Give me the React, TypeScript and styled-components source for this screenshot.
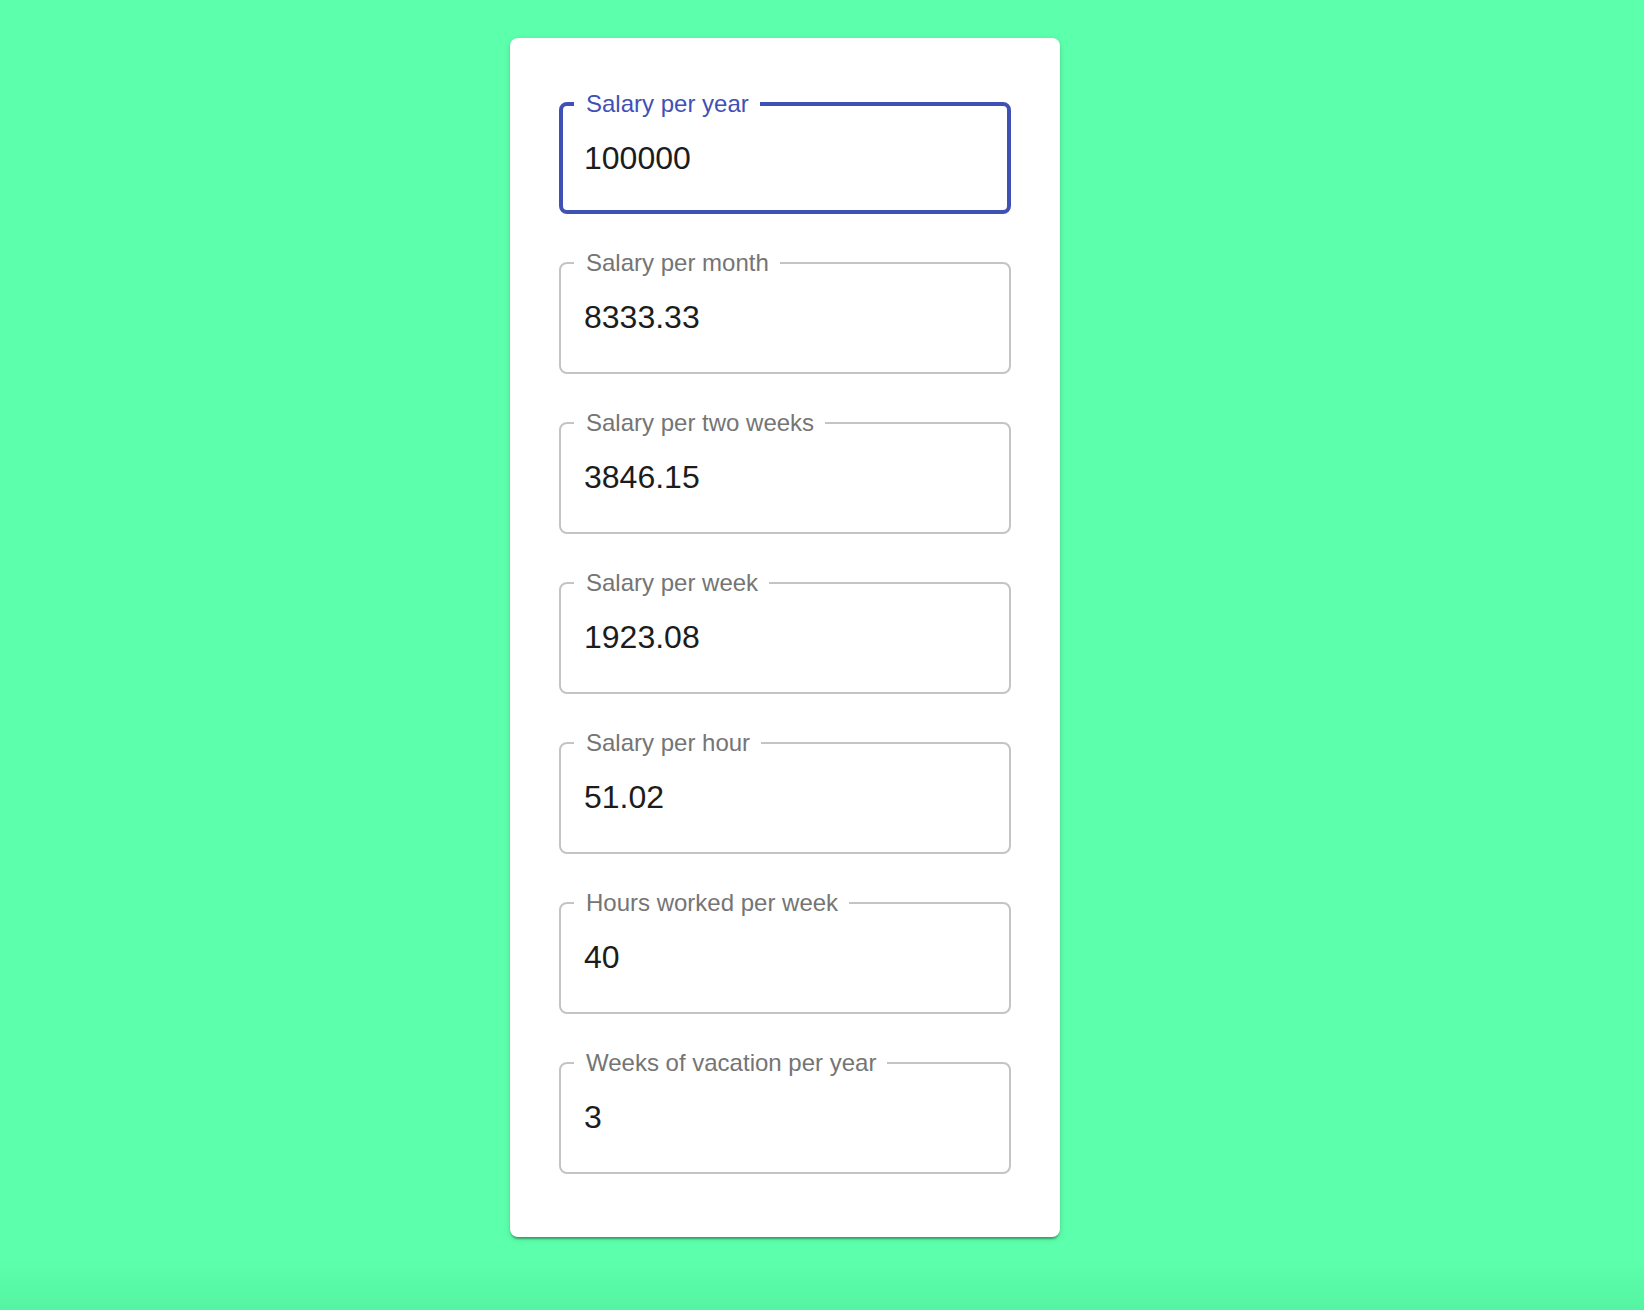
import styled, { createGlobalStyle } from "styled-components";

const GlobalStyle = createGlobalStyle`
  html, body {
    margin: 0;
    padding: 0;
  }
  body {
    font-family: "Liberation Sans", Arial, sans-serif;
    background: #5cffab;
  }
`;

const fields = [
  { label: "Salary per year", value: "100000", focused: true },
  { label: "Salary per month", value: "8333.33" },
  { label: "Salary per two weeks", value: "3846.15" },
  { label: "Salary per week", value: "1923.08" },
  { label: "Salary per hour", value: "51.02" },
  { label: "Hours worked per week", value: "40" },
  { label: "Weeks of vacation per year", value: "3" },
];

export default function App() {
  return (
    <>
      <GlobalStyle />
      <Page>
        <Card>
          {fields.map((f) => (
            <Field key={f.label} $focused={!!f.focused}>
              <Label $focused={!!f.focused}>{f.label}</Label>
              <Input
                $focused={!!f.focused}
                defaultValue={f.value}
                readOnly
              />
            </Field>
          ))}
        </Card>
      </Page>
    </>
  );
}

const Page = styled.div`
  min-height: 1310px;
  box-sizing: border-box;
  padding: 38px 0 0 510px;
  background: linear-gradient(
    to bottom,
    #5cffab 0px,
    #5cffab 1260px,
    #55f4a2 1310px
  );
`;

const Card = styled.div`
  width: 550px;
  box-sizing: border-box;
  padding: 54px 49px 63px;
  background: #fff;
  border-radius: 8px;
  box-shadow: 0 4px 2px -2px rgba(0, 0, 0, 0.2), 0 2px 2px rgba(0, 0, 0, 0.14),
    0 2px 6px rgba(0, 0, 0, 0.12);
  display: flex;
  flex-direction: column;
  gap: 37px;
`;

const Field = styled.fieldset<{ $focused: boolean }>`
  margin: 0;
  padding: 0;
  min-width: 0;
  border: ${(p) => (p.$focused ? "4px solid #3f51b5" : "2px solid #c4c4c4")};
  border-radius: 8px;
  display: flex;
`;

const Label = styled.legend<{ $focused: boolean }>`
  margin-left: ${(p) => (p.$focused ? 11 : 13)}px;
  padding: 0 11px 0 12px;
  font-size: 24px;
  line-height: 24px;
  color: ${(p) => (p.$focused ? "#3f51b5" : "#757575")};
`;

const Input = styled.input<{ $focused: boolean }>`
  width: 100%;
  box-sizing: border-box;
  border: 0;
  outline: none;
  background: transparent;
  margin: 0;
  padding: ${(p) => (p.$focused ? "26px 21px 36px" : "26px 23px 39px")};
  font-family: "Liberation Sans", Arial, sans-serif;
  font-size: 32px;
  line-height: 32px;
  height: ${(p) => (p.$focused ? 94 : 97)}px;
  color: #1c1c1c;
`;
